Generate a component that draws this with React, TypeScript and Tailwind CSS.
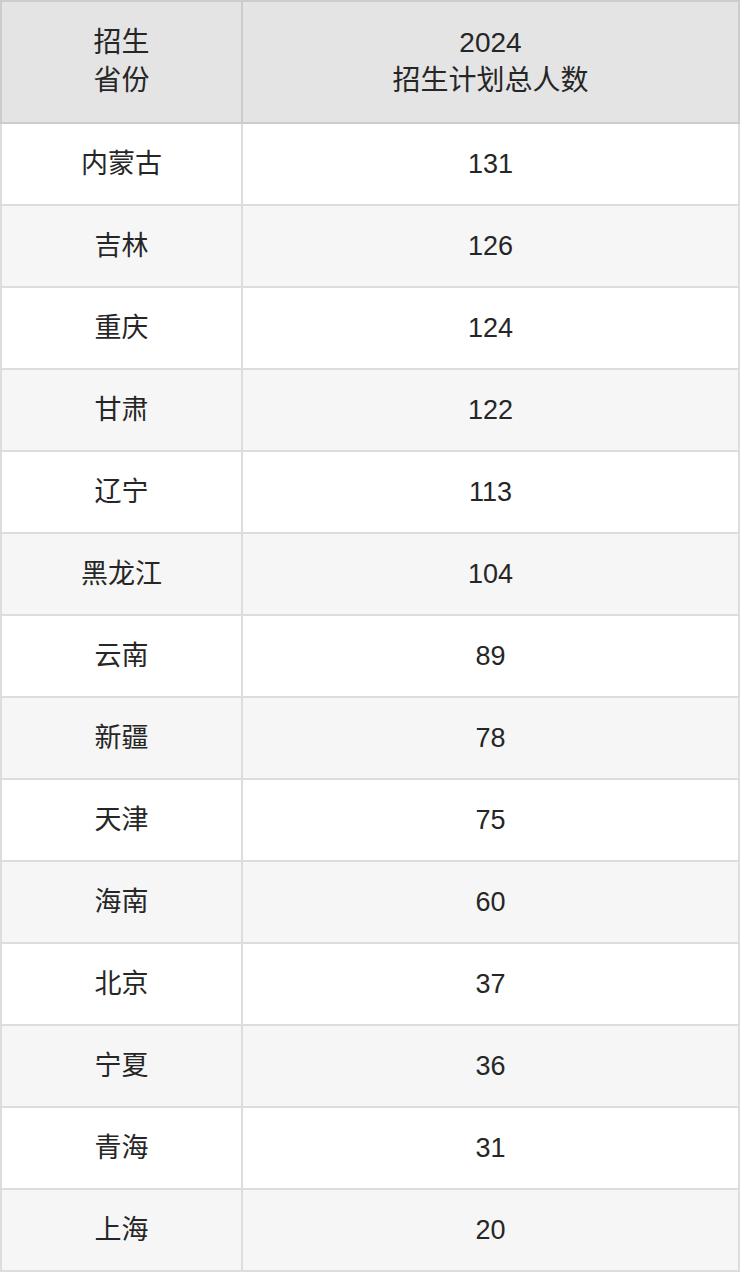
import React from "react";

const rows: [string, number][] = [
  ["内蒙古", 131],
  ["吉林", 126],
  ["重庆", 124],
  ["甘肃", 122],
  ["辽宁", 113],
  ["黑龙江", 104],
  ["云南", 89],
  ["新疆", 78],
  ["天津", 75],
  ["海南", 60],
  ["北京", 37],
  ["宁夏", 36],
  ["青海", 31],
  ["上海", 20],
];

export default function App() {
  return (
    <div
      className="w-[740px] bg-white text-[27px] text-[#262626]"
      style={{ fontFamily: '"Liberation Sans", "Noto Sans CJK SC", sans-serif' }}
    >
      <div className="flex h-[124px] border-2 border-[#cccccc] bg-[#e4e4e4] text-[28px] leading-[38px]">
        <div className="flex w-[241px] shrink-0 items-center justify-center border-r-2 border-[#cccccc] text-center">
          招生
          <br />
          省份
        </div>
        <div className="flex flex-1 items-center justify-center text-center">
          2024
          <br />
          招生计划总人数
        </div>
      </div>
      {rows.map(([name, n], i) => (
        <div
          key={name}
          className={`flex h-[82px] border-x-2 border-b-2 border-[#dddddd] ${
            i % 2 === 1 ? "bg-[#f6f6f6]" : "bg-white"
          }`}
        >
          <div className="flex w-[241px] shrink-0 items-center justify-center border-r-2 border-[#dddddd]">
            {name}
          </div>
          <div className="flex flex-1 items-center justify-center">{n}</div>
        </div>
      ))}
    </div>
  );
}
